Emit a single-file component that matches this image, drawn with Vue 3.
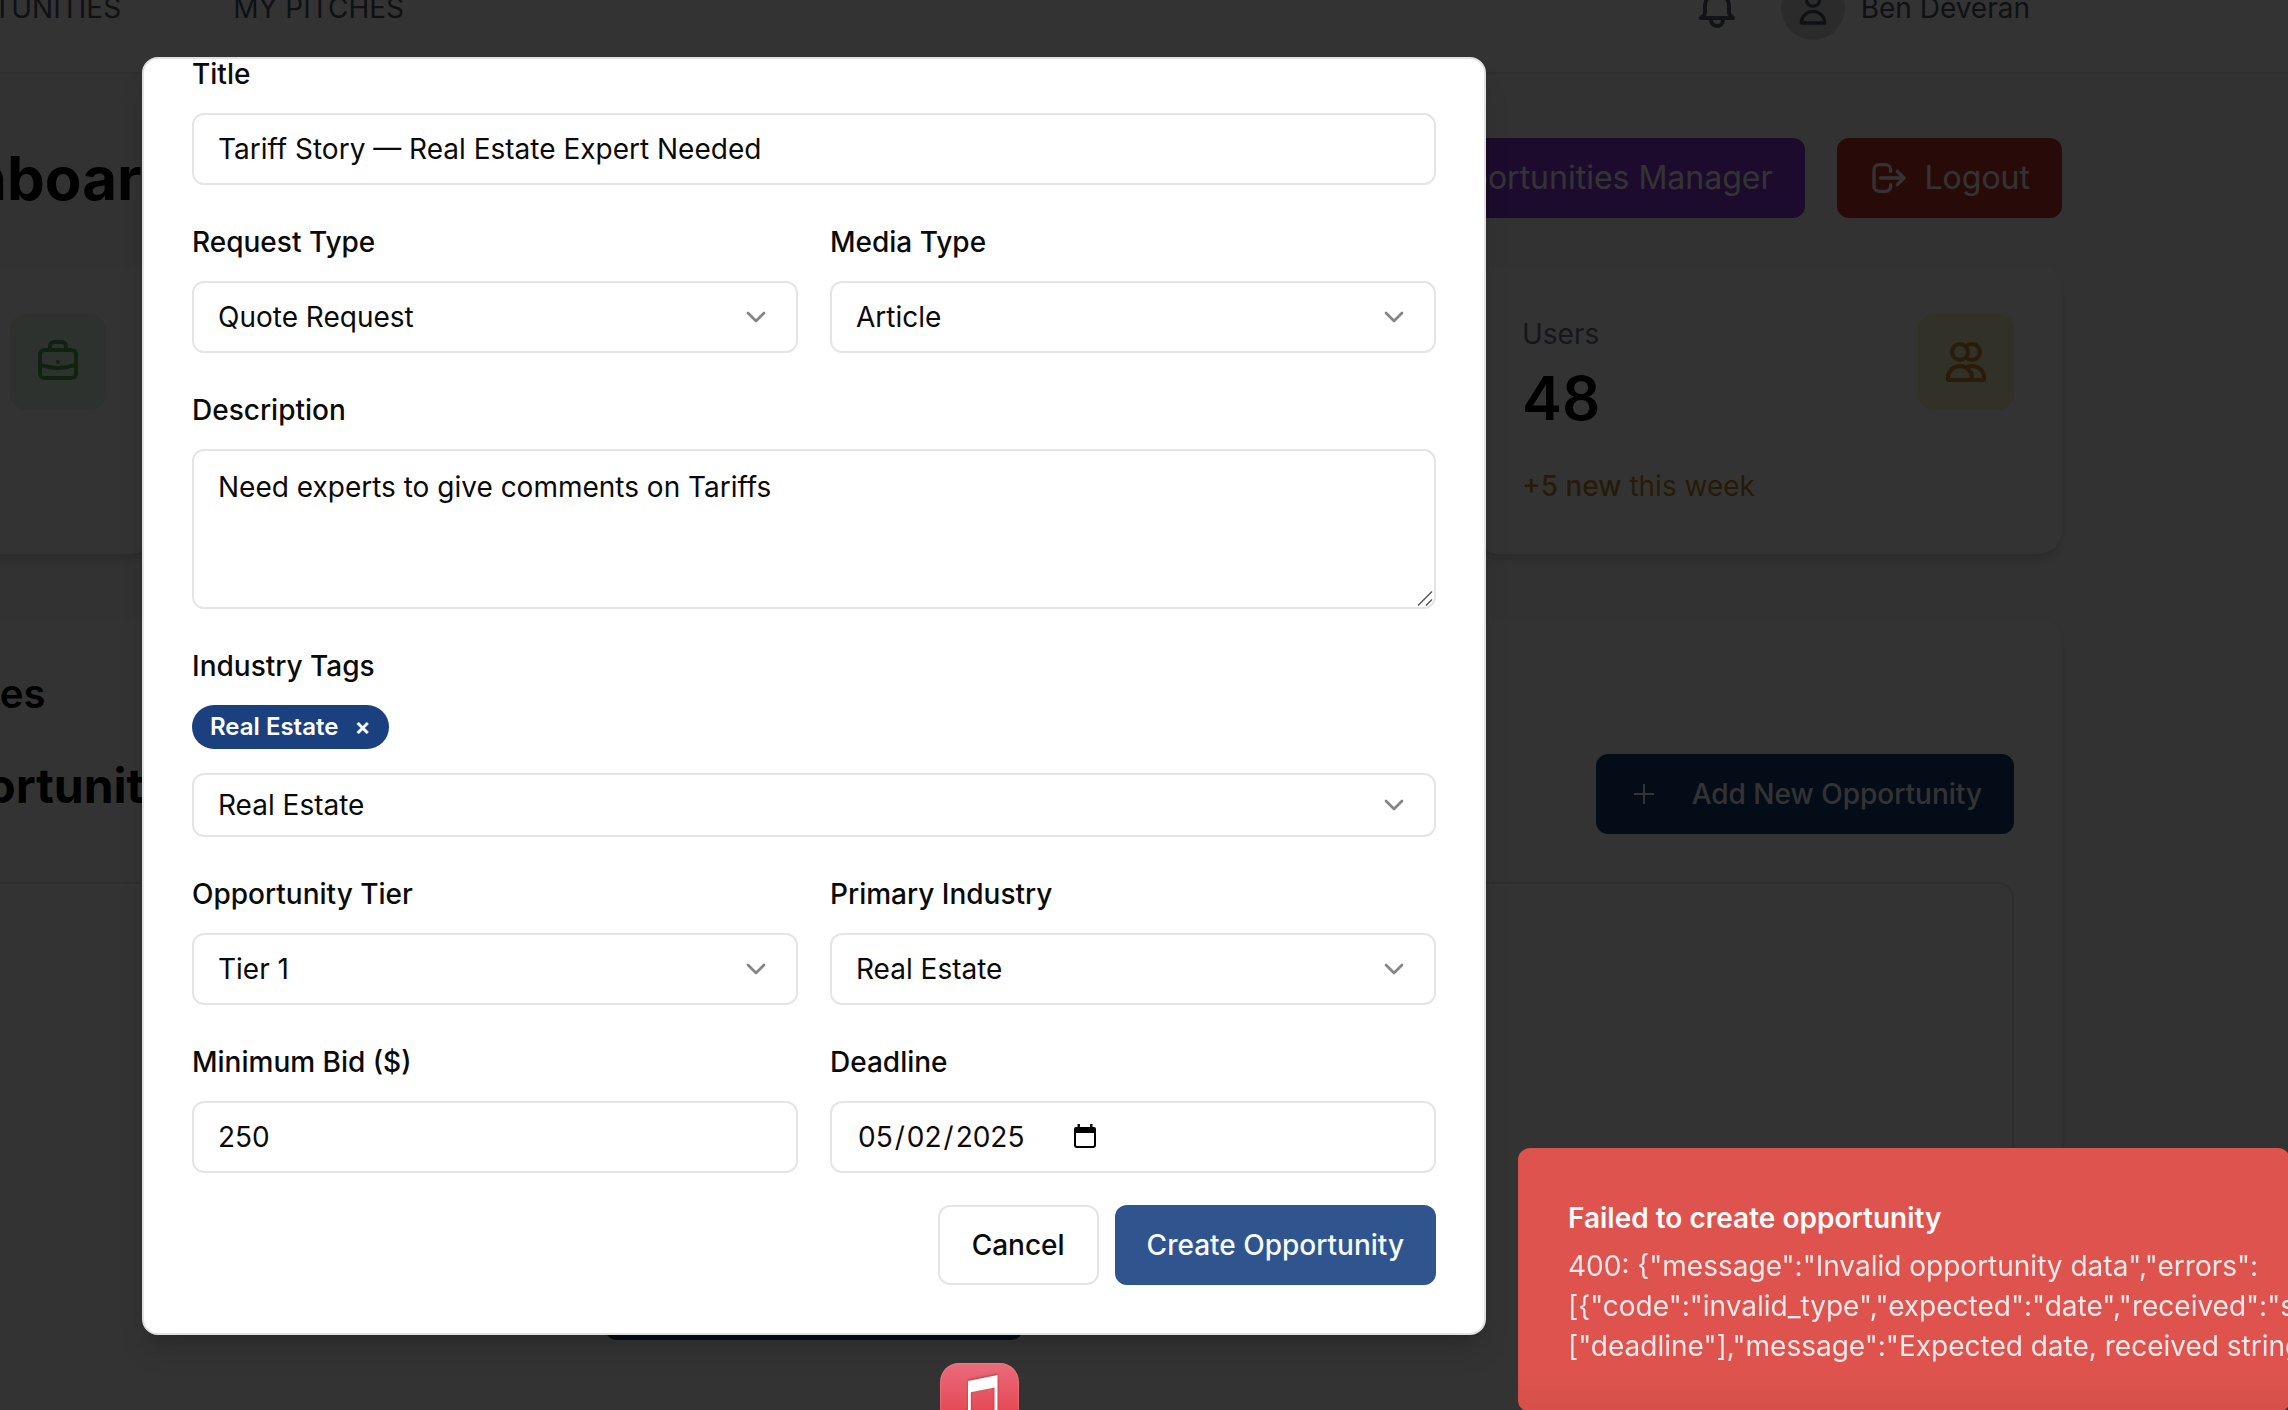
<script setup>
import { ref } from 'vue'

const title = ref('Tariff Story — Real Estate Expert Needed')
const description = ref('Need experts to give comments on Tariffs')
const tags = ref(['Real Estate'])

function removeTag(tag) {
  tags.value = tags.value.filter((t) => t !== tag)
}

const toastLines = [
  '400: {"message":"Invalid opportunity data","errors":',
  '[{"code":"invalid_type","expected":"date","received":"string","path":',
  '["deadline"],"message":"Expected date, received string"}]}',
]
</script>

<template>
  <div class="screen">
    <div class="page">
      <header class="topbar">
        <nav class="nav">
          <a>OPPORTUNITIES</a>
          <a>MY PITCHES</a>
        </nav>
        <div class="account">
          <svg class="icon bell" viewBox="0 0 24 24"><path d="M15 17h5l-1.405-1.405A2.032 2.032 0 0118 14.158V11a6.002 6.002 0 00-4-5.659V5a2 2 0 10-4 0v.341C7.67 6.165 6 8.388 6 11v3.159c0 .538-.214 1.055-.595 1.436L4 17h5m6 0v1a3 3 0 11-6 0v-1m6 0H9" /></svg>
          <span class="avatar">
            <svg class="icon icon-md" viewBox="0 0 24 24"><path d="M16 7a4 4 0 11-8 0 4 4 0 018 0zM12 14a7 7 0 00-7 7h14a7 7 0 00-7-7z" /></svg>
          </span>
          <span class="username">Ben Deveran</span>
        </div>
      </header>

      <main class="main">
        <div class="heading-row">
          <h1>Admin Dashboard</h1>
          <div class="heading-actions">
            <button class="btn-top purple">Opportunities Manager</button>
            <button class="btn-top red">
              <svg class="icon icon-md" viewBox="0 0 24 24"><path d="M17 16l4-4m0 0l-4-4m4 4H7m6 4v1a3 3 0 01-3 3H6a3 3 0 01-3-3V7a3 3 0 013-3h4a3 3 0 013 3v1" /></svg>
              Logout
            </button>
          </div>
        </div>

        <div class="stats">
          <section class="stat">
            <div class="stat-icon green">
              <svg class="icon icon-lg" viewBox="0 0 24 24"><path d="M21 13.255A23.931 23.931 0 0112 15c-3.183 0-6.22-.62-9-1.745M16 6V4a2 2 0 00-2-2h-4a2 2 0 00-2 2v2m4 6h.01M5 20h14a2 2 0 002-2V8a2 2 0 00-2-2H5a2 2 0 00-2 2v10a2 2 0 002 2z" /></svg>
            </div>
          </section>
          <section class="stat"></section>
          <section class="stat"></section>
          <section class="stat">
            <div class="stat-text">
              <span class="stat-label">Users</span>
              <strong class="stat-value">48</strong>
              <span class="stat-trend"><b>+5 new</b> this week</span>
            </div>
            <div class="stat-icon yellow">
              <svg class="icon icon-lg" viewBox="0 0 24 24"><path d="M12 4.354a4 4 0 110 5.292M15 21H3v-1a6 6 0 0112 0v1zm0 0h6v-1a6 6 0 00-9-5.197M13 7a4 4 0 11-8 0 4 4 0 018 0z" /></svg>
            </div>
          </section>
        </div>

        <section class="panel">
          <h3 class="panel-title">Manage Opportunities</h3>
          <div class="panel-head">
            <h2>Media Opportunities</h2>
            <button class="btn-add">
              <svg class="plus" viewBox="0 0 22 22"><path d="M11 1v20M1 11h20" /></svg>
              Add New Opportunity
            </button>
          </div>
          <div class="panel-empty">
            <button class="btn-add">
              <svg class="plus" viewBox="0 0 22 22"><path d="M11 1v20M1 11h20" /></svg>
              Add New Opportunity
            </button>
          </div>
        </section>
      </main>
    </div>

    <div class="overlay"></div>

    <div class="dialog" role="dialog">
      <div class="field">
        <label>Title</label>
        <div class="control">{{ title }}</div>
      </div>

      <div class="row">
        <div class="field">
          <label>Request Type</label>
          <div class="control">Quote Request<svg class="chevron" viewBox="0 0 24 24"><path d="m6 9 6 6 6-6" /></svg></div>
        </div>
        <div class="field">
          <label>Media Type</label>
          <div class="control">Article<svg class="chevron" viewBox="0 0 24 24"><path d="m6 9 6 6 6-6" /></svg></div>
        </div>
      </div>

      <div class="field">
        <label>Description</label>
        <div class="control area">
          {{ description }}
          <svg class="grip" viewBox="0 0 16 16"><path d="M1 15.5 15 1.5M9 15.5 15 9.5" /></svg>
        </div>
      </div>

      <div class="field">
        <label>Industry Tags</label>
        <div class="tags">
          <span v-for="tag in tags" :key="tag" class="tag">{{ tag }}<button class="tag-x" @click="removeTag(tag)">×</button></span>
        </div>
        <div class="control short">Real Estate<svg class="chevron" viewBox="0 0 24 24"><path d="m6 9 6 6 6-6" /></svg></div>
      </div>

      <div class="row">
        <div class="field">
          <label>Opportunity Tier</label>
          <div class="control">Tier 1<svg class="chevron" viewBox="0 0 24 24"><path d="m6 9 6 6 6-6" /></svg></div>
        </div>
        <div class="field">
          <label>Primary Industry</label>
          <div class="control">Real Estate<svg class="chevron" viewBox="0 0 24 24"><path d="m6 9 6 6 6-6" /></svg></div>
        </div>
      </div>

      <div class="row">
        <div class="field">
          <label>Minimum Bid ($)</label>
          <div class="control">250</div>
        </div>
        <div class="field">
          <label>Deadline</label>
          <div class="control date">
            <span class="seg">05</span>/<span class="seg">02</span>/<span class="seg">2025</span>
            <svg class="calendar" viewBox="0 0 22 24">
              <path class="cal-fill" d="M2 3h18a2 2 0 0 1 2 2v4H0V5a2 2 0 0 1 2-2zM3.5 0h2.4v4H3.5zM16.1 0h2.4v4h-2.4z" />
              <path class="cal-line" d="M1 5v16a2 2 0 0 0 2 2h16a2 2 0 0 0 2-2V5" />
            </svg>
          </div>
        </div>
      </div>

      <div class="actions">
        <button class="btn cancel">Cancel</button>
        <button class="btn create">Create Opportunity</button>
      </div>
    </div>

    <div class="dock-app">
      <svg viewBox="0 0 79 79"><path d="M28 18 57.5 12V52h-3V24.5L30.8 29.3V58H28z" /></svg>
    </div>

    <div class="toast" role="alert">
      <div class="toast-title">Failed to create opportunity</div>
      <div class="toast-body">
        <div v-for="line in toastLines" :key="line">{{ line }}</div>
      </div>
    </div>
  </div>
</template>

<style>
body {
  margin: 0;
  overflow: hidden;
}
</style>

<style scoped>
.screen {
  position: relative;
  width: 2288px;
  height: 1410px;
  overflow: hidden;
  font-family: Inter, "Liberation Sans", sans-serif;
  font-size: 28px;
  line-height: 40px;
  color: #0a0a0a;
  background: #fafafa;
}
.screen *,
.screen *::before {
  box-sizing: border-box;
}
button {
  font: inherit;
  border: 0;
  white-space: nowrap;
}
h1,
h2,
h3 {
  margin: 0;
  white-space: nowrap;
}
.page {
  height: 1410px;
  display: flex;
  flex-direction: column;
  overflow: hidden;
}
.icon {
  flex: none;
  fill: none;
  stroke: currentColor;
  stroke-width: 2;
  stroke-linecap: round;
  stroke-linejoin: round;
}
.icon-md {
  width: 40px;
  height: 40px;
}
.icon-lg {
  width: 48px;
  height: 48px;
}

/* top bar */
.topbar {
  flex: none;
  margin-top: -56px;
  height: 130px;
  display: flex;
  align-items: center;
  justify-content: space-between;
  padding-right: 258px;
  background: #fff;
  border-bottom: 2px solid #e5e7eb;
  color: #4b5563;
}
.nav {
  display: flex;
  justify-content: flex-end;
  gap: 112px;
  width: 404px;
  flex: none;
  white-space: nowrap;
}
.account {
  display: flex;
  align-items: center;
}
.bell {
  width: 48px;
  height: 48px;
  color: #5b6270;
}
.avatar {
  width: 64px;
  height: 64px;
  margin: 0 16px 0 40px;
  border-radius: 50%;
  background: #d6d8dc;
  display: flex;
  align-items: center;
  justify-content: center;
}

/* main */
.main {
  flex: none;
  width: 2496px;
  margin-left: -434px;
  padding-top: 64px;
}
.heading-row {
  display: flex;
  align-items: center;
  justify-content: space-between;
  height: 80px;
}
h1 {
  padding-left: 88px;
  font-size: 60px;
  line-height: 72px;
  font-weight: 700;
  color: #000;
}
.heading-actions {
  display: flex;
  gap: 32px;
}
.btn-top {
  display: flex;
  align-items: center;
  gap: 16px;
  height: 80px;
  padding: 0 32px;
  border-radius: 12px;
  font-size: 32px;
  color: #fff;
}
.purple {
  background: #8a37da;
}
.red {
  background: #c83a2d;
}
.stats {
  display: grid;
  grid-template-columns: repeat(4, 588px);
  gap: 48px;
  margin-top: 48px;
}
.stat {
  height: 288px;
  padding: 48px;
  display: flex;
  justify-content: flex-end;
  border-radius: 24px;
  background: #fff;
  box-shadow: 0 8px 12px -2px rgba(0, 0, 0, 0.12), 0 4px 8px -4px rgba(0, 0, 0, 0.12);
}
.stat-text {
  flex: 1;
  display: flex;
  flex-direction: column;
}
.stat-label {
  color: #6b7280;
}
.stat-value {
  margin: 8px 0 32px;
  font-size: 60px;
  line-height: 72px;
  font-weight: 600;
  color: #000;
}
.stat-trend {
  color: #c4861e;
}
.stat-trend b {
  font-weight: 500;
}
.stat-icon {
  width: 96px;
  height: 96px;
  border-radius: 16px;
  display: flex;
  align-items: center;
  justify-content: center;
}
.green {
  background: #e6faeb;
  color: #4bb04f;
}
.yellow {
  background: #faf5c3;
  color: #cd8a28;
}
.panel {
  margin-top: 64px;
  height: 900px;
  padding: 56px 48px 0;
  border-radius: 24px;
  background: #fff;
  box-shadow: 0 4px 8px rgba(0, 0, 0, 0.1);
}
.panel-title {
  font-size: 40px;
  line-height: 40px;
  font-weight: 600;
  color: #000;
}
.panel-head {
  display: flex;
  justify-content: space-between;
  margin-top: 40px;
}
h2 {
  padding-left: 119px;
  font-size: 48px;
  line-height: 64px;
  font-weight: 700;
  color: #000;
}
.btn-add {
  display: flex;
  align-items: center;
  gap: 37px;
  height: 80px;
  padding: 0 32px 0 37px;
  border-radius: 12px;
  font-weight: 500;
  color: #fff;
  background: #143c78;
}
.plus {
  width: 22px;
  height: 22px;
  fill: none;
  stroke: currentColor;
  stroke-width: 2;
}
.panel-empty {
  display: flex;
  justify-content: center;
  align-items: flex-start;
  height: 600px;
  margin-top: 48px;
  padding-top: 376px;
  border: 2px solid #e5e5e5;
  border-radius: 16px;
}

.overlay {
  position: absolute;
  inset: 0;
  background: rgba(0, 0, 0, 0.8);
}

/* dialog */
.dialog {
  position: absolute;
  left: 142px;
  top: 57px;
  width: 1344px;
  height: 1278px;
  padding: 1px 48px 48px;
  display: flex;
  flex-direction: column;
  gap: 43px;
  overflow: hidden;
  background: #fff;
  border: 2px solid #e0e1e1;
  border-radius: 16px;
  box-shadow: 0 20px 30px -6px rgba(0, 0, 0, 0.14), 0 8px 12px -8px rgba(0, 0, 0, 0.14);
}
.row {
  display: grid;
  grid-template-columns: 1fr 1fr;
  gap: 32px;
}
.field {
  display: flex;
  flex-direction: column;
}
label {
  line-height: 28px;
  margin-bottom: 25px;
  font-weight: 500;
}
.control {
  position: relative;
  display: flex;
  align-items: center;
  height: 72px;
  padding: 0 24px;
  border: 2px solid #e5e5e5;
  border-radius: 12px;
  background: #fff;
  white-space: nowrap;
}
.short {
  height: 64px;
}
.area {
  height: 160px;
  align-items: flex-start;
  padding-top: 16px;
}
.chevron {
  width: 32px;
  height: 32px;
  margin-left: auto;
  fill: none;
  stroke: #858585;
  stroke-width: 2;
  stroke-linecap: round;
  stroke-linejoin: round;
}
.grip {
  position: absolute;
  right: 1px;
  bottom: 1px;
  width: 16px;
  height: 16px;
  fill: none;
  stroke: #555;
  stroke-width: 1.4;
}
.tags {
  display: flex;
  margin-bottom: 24px;
}
.tag {
  display: flex;
  align-items: center;
  height: 44px;
  padding: 0 18px;
  border-radius: 22px;
  background: #1a407f;
  color: #fff;
  font-size: 24px;
  font-weight: 600;
}
.tag-x {
  margin-left: 16px;
  padding: 0;
  background: none;
  color: inherit;
}
.date {
  padding-left: 24px;
}
.seg {
  padding: 0 2px;
}
.calendar {
  width: 22px;
  height: 24px;
  margin: 0 0 2px 48px;
}
.cal-fill {
  fill: #000;
}
.cal-line {
  fill: none;
  stroke: #000;
  stroke-width: 2;
}
.actions {
  display: flex;
  justify-content: flex-end;
  gap: 16px;
  margin-top: -11px;
}
.btn {
  height: 80px;
  padding: 0 32px;
  border-radius: 12px;
  font-weight: 500;
}
.cancel {
  border: 2px solid #e5e5e5;
  background: #fff;
  color: #0a0a0a;
}
.create {
  background: #30548e;
  color: #f8fafc;
}

/* dock */
.dock-app {
  position: absolute;
  left: 940px;
  top: 1363px;
  width: 79px;
  height: 79px;
  border-radius: 19px;
  background: linear-gradient(#ea6b7a, #e64a57 60%, #e34350);
  box-shadow: inset 0 0 0 1px rgba(255, 255, 255, 0.12);
}
.dock-app svg {
  display: block;
  width: 79px;
  height: 79px;
  fill: #fff;
  filter: drop-shadow(0 -1px 1px rgba(120, 20, 30, 0.5));
}

/* toast */
.toast {
  position: absolute;
  left: 1518px;
  top: 1148px;
  width: 772px;
  height: 264px;
  padding: 50px 0 0 50px;
  overflow: hidden;
  border-radius: 12px;
  background: linear-gradient(#de534d 84%, #d6504b);
  color: #fafafa;
}
.toast-title {
  font-weight: 600;
}
.toast-body {
  margin-top: 8px;
  white-space: nowrap;
  opacity: 0.9;
}
</style>
